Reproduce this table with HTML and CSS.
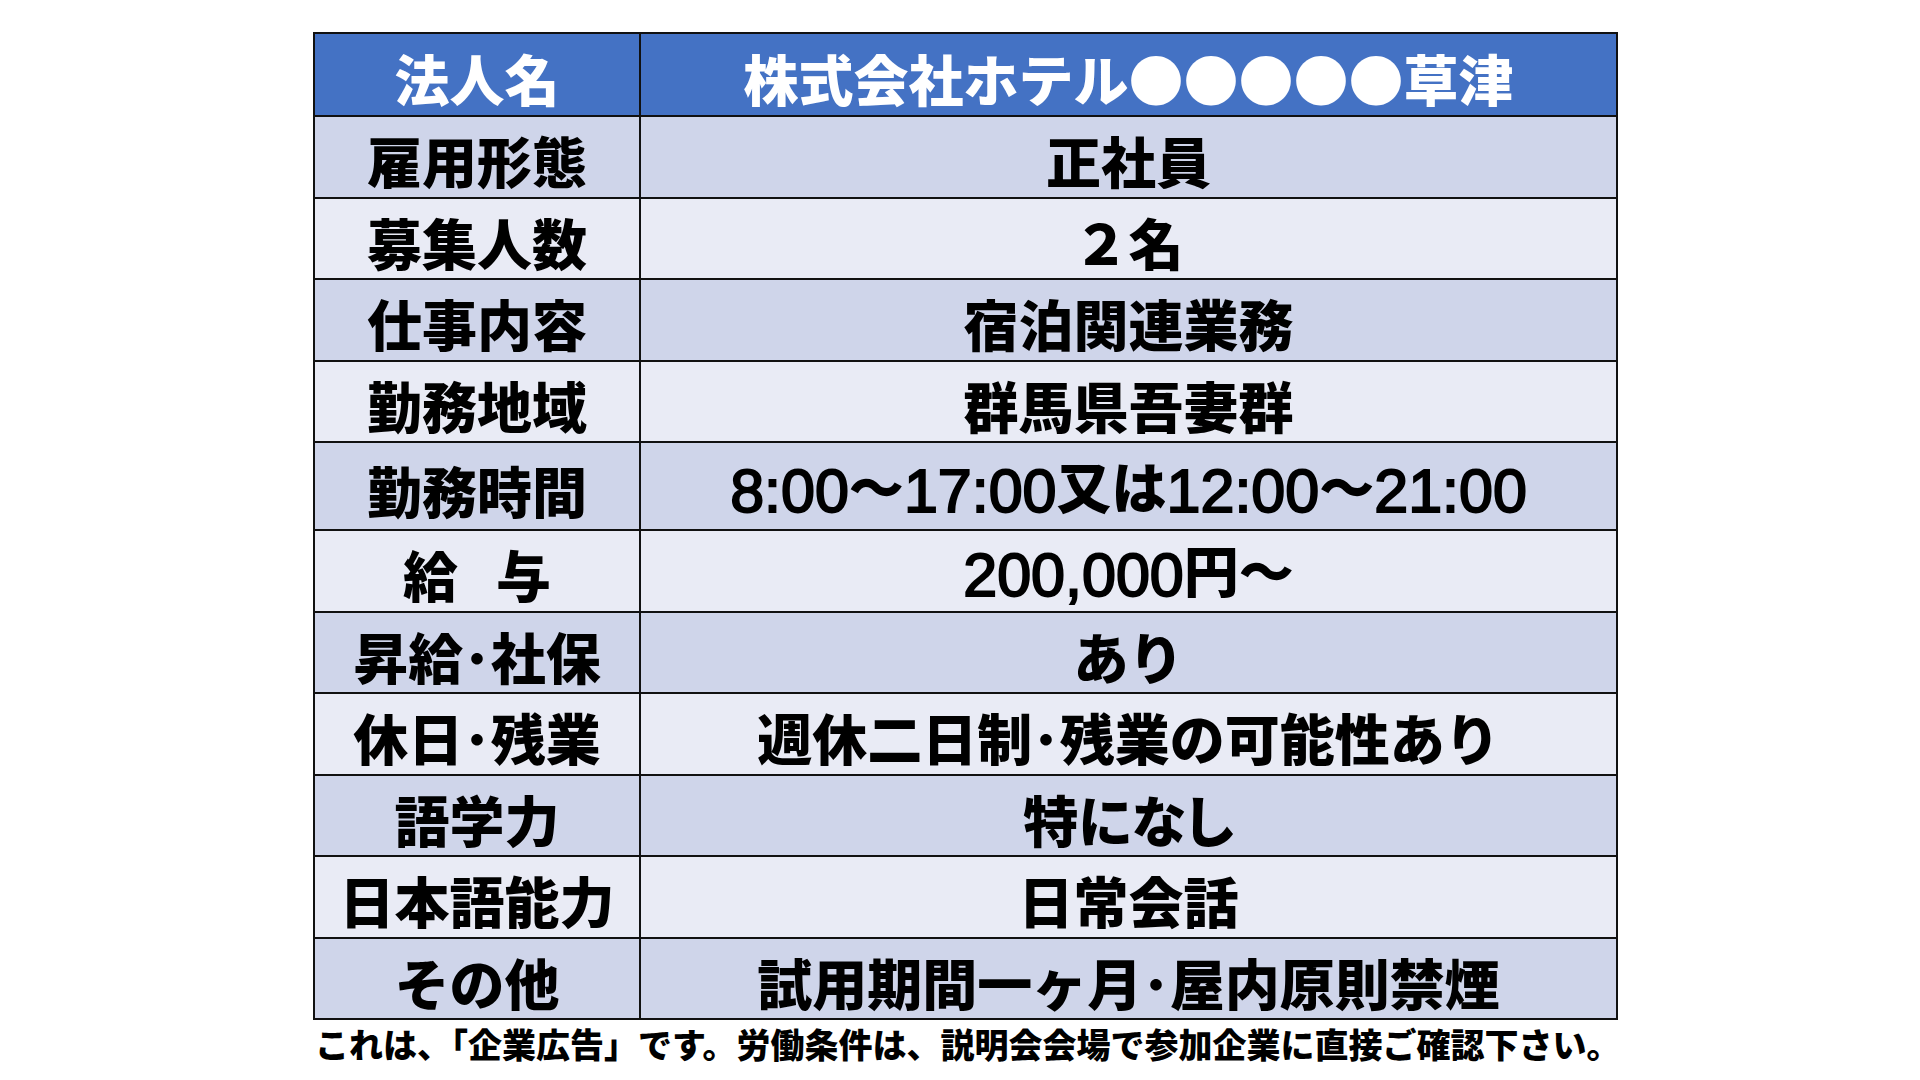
FILE: index.html
```html
<!DOCTYPE html>
<html lang="ja">
<head>
<meta charset="utf-8">
<link rel="stylesheet" href="styles.css">
</head>
<body>
<main class="page">
  <table class="info">
    <colgroup><col class="c-label"><col class="c-value"></colgroup>
    <tr class="head"><th>法人名</th><th>株式会社ホテル●●●●●草津</th></tr>
    <tr class="odd"><td>雇用形態</td><td>正社員</td></tr>
    <tr class="even"><td>募集人数</td><td>２名</td></tr>
    <tr class="odd"><td>仕事内容</td><td>宿泊関連業務</td></tr>
    <tr class="even"><td>勤務地域</td><td>群馬県吾妻群</td></tr>
    <tr class="odd tall"><td>勤務時間</td><td><span class="num">8:00</span>～<span class="num">17:00</span>又は<span class="num">12:00</span>～<span class="num">21:00</span></td></tr>
    <tr class="even"><td>給<span class="gap">　</span>与</td><td><span class="num">200,000</span>円～</td></tr>
    <tr class="odd"><td>昇給･社保</td><td>あり</td></tr>
    <tr class="even"><td>休日･残業</td><td>週休二日制･残業の可能性あり</td></tr>
    <tr class="odd"><td>語学力</td><td><span class="prop">特になし</span></td></tr>
    <tr class="even"><td>日本語能力</td><td>日常会話</td></tr>
    <tr class="odd"><td>その他</td><td>試用期間一ヶ月･屋内原則禁煙</td></tr>
  </table>
  <p class="note">これは、「企業広告」です。労働条件は、説明会会場で参加企業に直接ご確認下さい。</p>
</main>
</body>
</html>
```
FILE: styles.css
```css
html, body {
  margin: 0;
  padding: 0;
  background: #ffffff;
}

body {
  font-family: "Noto Sans CJK JP", "Noto Sans", sans-serif;
  color: #000;
}

.page {
  padding: 32px 0 0 313px;
}

.info {
  border-collapse: collapse;
  table-layout: fixed;
  width: 1303px;
}

.c-label { width: 326px; }
.c-value { width: 977px; }

.info th,
.info td {
  border: 2px solid #111;
  padding: 6px 0 0 0;
  text-align: center;
  vertical-align: middle;
  font-size: 55px;
  font-weight: 900;
  line-height: 1;
  white-space: nowrap;
}

.info tr { height: 81.5px; }
.info tr.head { height: 83px; }
.info tr.tall { height: 88px; }

.head th {
  background: #4472c4;
  color: #ffffff;
}

.odd td { background: #cfd5ea; }
.even td { background: #e9ebf5; }

.num {
  font-family: "Liberation Sans", Arial, sans-serif;
  font-weight: 400;
  font-size: 61px;
  -webkit-text-stroke: 2px #000;
  vertical-align: -4px;
}

.gap {
  font-size: 38px;
}

.prop {
  font-feature-settings: "palt";
}

.note {
  margin: 4px 0 0 2px;
  font-size: 34px;
  font-weight: 900;
  line-height: 1.2;
  white-space: nowrap;
}
```
